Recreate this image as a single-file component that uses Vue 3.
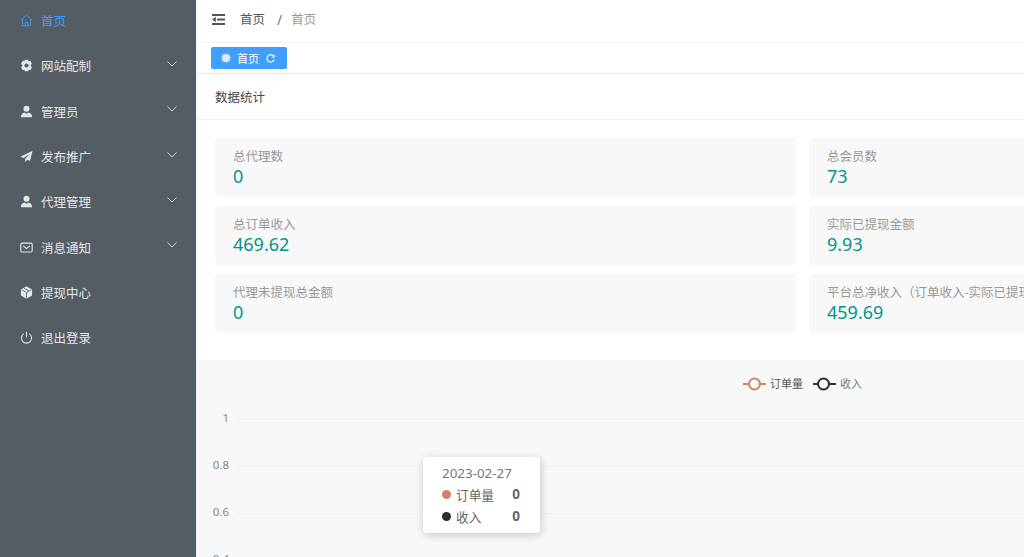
<template>
  <div class="layout">
    <aside class="sidebar">
      <ul class="menu">
        <li
          v-for="item in menus"
          :key="item.title"
          class="menu-item"
          :class="{ active: item.active }"
        >
          <svg class="menu-icon" viewBox="0 0 16 16" v-html="item.icon"></svg>
          <span class="menu-title">{{ item.title }}</span>
          <svg v-if="item.arrow" class="menu-arrow" viewBox="0 0 12 8">
            <path d="M1.500 1.500 6 6l4.500-4.500" fill="none" stroke="currentColor" stroke-width="1" />
          </svg>
        </li>
      </ul>
    </aside>

    <main class="main">
      <header class="navbar">
        <svg class="fold" viewBox="0 0 13 11">
          <path d="M0 1h13M5 5.500h8M0 10h13" stroke="#555" stroke-width="2" fill="none" />
          <path d="M3.800 2.800v5.400L0 5.500z" fill="#555" />
        </svg>
        <span class="crumb">首页</span>
        <span class="crumb-sep">/</span>
        <span class="crumb muted">首页</span>
      </header>

      <div class="tags">
        <div class="tag">
          <i class="tag-dot"></i>
          <span>首页</span>
          <svg class="tag-refresh" viewBox="0 0 12 12">
            <path d="M9.800 4.200A4 4 0 1 0 10 7" fill="none" stroke="#fff" stroke-width="1.300" />
            <path d="M10.600 1.600v3.300H7.300z" fill="#fff" />
          </svg>
        </div>
      </div>

      <section class="panel">
        <div class="panel-head">数据统计</div>
        <div class="stats">
          <div v-for="stat in stats" :key="stat.label" class="stat">
            <div class="stat-label">{{ stat.label }}</div>
            <div class="stat-value">{{ stat.value }}</div>
          </div>
        </div>
      </section>

      <section class="chart">
        <svg class="chart-canvas" width="827" height="197" viewBox="197 360 827 197">
          <g class="legend">
            <path d="M743 384h23" stroke="#d48265" stroke-width="2" />
            <circle cx="754.500" cy="384" r="5.500" fill="#f8f8f8" stroke="#d48265" stroke-width="2" />
            <text x="770" y="388">订单量</text>
            <path d="M813 384h23" stroke="#333" stroke-width="2" />
            <circle cx="823.500" cy="384" r="5.500" fill="#f8f8f8" stroke="#2b2b2b" stroke-width="2" />
            <text class="legend-muted" x="840" y="388">收入</text>
          </g>
          <g v-for="line in gridLines" :key="line.label">
            <path :d="`M237 ${line.y}H1024`" stroke="#eef1f6" stroke-width="1" />
            <text class="axis" x="229" :y="line.text" text-anchor="end">{{ line.label }}</text>
          </g>
        </svg>
        <div class="tooltip">
          <div class="tooltip-date">2023-02-27</div>
          <div class="tooltip-row">
            <i class="dot orange"></i>
            <span class="tooltip-name">订单量</span>
            <b>0</b>
          </div>
          <div class="tooltip-row">
            <i class="dot dark"></i>
            <span class="tooltip-name">收入</span>
            <b>0</b>
          </div>
        </div>
      </section>
    </main>
  </div>
</template>

<script setup>
const person = '<circle cx="8" cy="4.600" r="3.700" fill="currentColor"/><path d="M1 15c0-4 2.600-5.600 4.400-5.900C6 10 7 10.400 8 10.400s2-.4 2.600-1.300C12.400 9.400 15 11 15 15z" fill="currentColor"/>'

const menus = [
  {
    title: '首页',
    active: true,
    icon: '<path d="M1.200 7.600 8 1.400l6.800 6.200M3 6.300v8.200h10V6.300M6.300 14.500v-3.800h3.400v3.800" fill="none" stroke="currentColor" stroke-width="1.200"/>'
  },
  {
    title: '网站配制',
    arrow: true,
    icon: '<path fill-rule="evenodd" fill="currentColor" d="M6 .8h4l.6 2.100 2.100-.6 2 3.400-1.500 1.600v1.400l1.500 1.600-2 3.400-2.100-.6L10 15.200H6l-.6-2.100-2.100.6-2-3.400 1.500-1.600V7.300L1.300 5.700l2-3.400 2.100.6zM8 5.400a2.600 2.600 0 1 0 0 5.200 2.600 2.600 0 0 0 0-5.200z"/>'
  },
  { title: '管理员', arrow: true, icon: person },
  {
    title: '发布推广',
    arrow: true,
    icon: '<path fill="currentColor" d="M15.500 1 .5 8.200l4.200 1.700L12.500 4.400 6.400 10.700v4.300l2.500-3 3.400 1.500z"/>'
  },
  { title: '代理管理', arrow: true, icon: person },
  {
    title: '消息通知',
    arrow: true,
    icon: '<rect x="1" y="2.600" width="14" height="11" rx="1.500" fill="none" stroke="currentColor" stroke-width="1.400"/><path d="M3.800 6 8 9.200 12.200 6" fill="none" stroke="currentColor" stroke-width="1.400"/>'
  },
  {
    title: '提现中心',
    icon: '<path fill="currentColor" d="M8 .4l6.900 3.800v7.600L8 15.600l-6.900-3.800V4.200z"/><path d="M2 4.500 8 8l6-3.500M8 8v7M5 2.800l6 3.300" fill="none" stroke="#545c64" stroke-width="1"/>'
  },
  {
    title: '退出登录',
    icon: '<path d="M4.800 3.200a6.300 6.300 0 1 0 6.400 0M8 .8v7" fill="none" stroke="currentColor" stroke-width="1.300"/>'
  }
]

const stats = [
  { label: '总代理数', value: '0' },
  { label: '总会员数', value: '73' },
  { label: '总订单收入', value: '469.62' },
  { label: '实际已提现金额', value: '9.93' },
  { label: '代理未提现总金额', value: '0' },
  { label: '平台总净收入（订单收入-实际已提现金额）', value: '459.69' }
]

const gridLines = [
  { label: '1', y: 419.5, text: 422 },
  { label: '0.8', y: 466.5, text: 469 },
  { label: '0.6', y: 513.5, text: 516 },
  { label: '0.4', y: 560.5, text: 563 }
]
</script>

<style>
html,
body {
  margin: 0;
  height: 100%;
  overflow: hidden;
}
</style>

<style scoped>
.layout {
  display: flex;
  width: 1024px;
  height: 557px;
  overflow: hidden;
  font-family: "Noto Sans", "Noto Sans CJK SC", sans-serif;
  color: #606266;
}

.sidebar {
  flex: 0 0 196px;
  background: #545c64;
  overflow: hidden;
}

.menu {
  list-style: none;
  margin: -2px 0 0;
  padding: 0;
}

.menu-item {
  display: flex;
  align-items: center;
  height: 45.300px;
  padding: 0 18px 0 20px;
  font-size: 12.500px;
  color: #e4e6e8;
}

.menu-item.active {
  color: #409eff;
}

.menu-icon {
  flex: none;
  width: 13px;
  height: 13px;
  margin-right: 8px;
}

.menu-title {
  flex: 1;
}

.menu-arrow {
  flex: none;
  width: 12px;
  height: 8px;
  margin-top: -4px;
  color: #c9ced3;
}

.main {
  flex: 1;
  min-width: 0;
  display: flex;
  flex-direction: column;
  overflow: hidden;
  background: #fff;
  border-left: 1px solid #eef0f6;
}

.navbar {
  flex: none;
  display: flex;
  align-items: center;
  height: 42px;
  box-sizing: content-box;
  padding: 0 0 0 15px;
  font-size: 12.500px;
  line-height: 38px;
  border-bottom: 1px solid #f2f3f5;
}

.fold {
  width: 13px;
  height: 11px;
  margin: -3px 15px 0 0;
}

.crumb {
  margin-top: -3px;
  color: #555;
}

.crumb.muted {
  color: #999;
}

.crumb-sep {
  margin: -3px 9px 0 12px;
  font-size: 14px;
  color: #777;
}

.tags {
  flex: none;
  height: 31px;
  padding: 4px 0 0 14px;
  box-sizing: border-box;
  background: #fff;
  border-bottom: 1px solid #eceef3;
}

.tag {
  display: flex;
  align-items: center;
  width: 76px;
  height: 22px;
  box-sizing: border-box;
  padding-left: 11px;
  background: #409eff;
  border-radius: 2px;
  color: #fff;
  font-size: 11px;
}

.tag-dot {
  width: 8px;
  height: 8px;
  margin-right: 7px;
  border-radius: 50%;
  background: #fff;
  opacity: 0.8;
  box-shadow: 0 0 2px rgba(255, 255, 255, 0.8);
}

.tag-refresh {
  width: 11px;
  height: 11px;
  margin-left: 6px;
}

.panel {
  flex: none;
  width: 1420px;
  height: 286px;
  box-sizing: border-box;
  background: #fff;
  box-shadow: 0 1px 4px rgba(0, 21, 41, 0.08);
  position: relative;
}

.panel-head {
  height: 46px;
  box-sizing: border-box;
  padding: 15px 0 0 18px;
  font-size: 12.500px;
  line-height: 18px;
  color: #444;
  border-bottom: 1px solid #f0f1f4;
}

.stats {
  display: grid;
  grid-template-columns: 581px 581px;
  column-gap: 13px;
  row-gap: 9px;
  padding: 18px 0 0 18px;
}

.stat {
  height: 59px;
  box-sizing: border-box;
  padding: 9px 0 0 18px;
  border-radius: 4px;
  background: #f8f8f8;
  white-space: nowrap;
}

.stat-label {
  font-size: 12.500px;
  line-height: 19px;
  color: #999;
}

.stat-value {
  font-size: 18px;
  line-height: 21px;
  color: #009688;
}

.chart {
  position: relative;
  flex: 1;
  min-height: 0;
  background: #f8f8f8;
  overflow: hidden;
}

.chart-canvas {
  display: block;
}

.legend text {
  font-size: 11px;
  fill: #555;
}

.legend .legend-muted {
  fill: #777;
}

.axis {
  font-size: 11.500px;
  fill: #888;
}

.tooltip {
  position: absolute;
  left: 226px;
  top: 97px;
  width: 117px;
  height: 76px;
  box-sizing: border-box;
  padding: 6px 20px 0 19px;
  background: #fff;
  border-radius: 4px;
  box-shadow: 1px 2px 10px rgba(0, 0, 0, 0.2);
  color: #666;
}

.tooltip-date {
  font-size: 13.400px;
  line-height: 20px;
  color: #777;
}

.tooltip-row {
  display: flex;
  align-items: center;
  height: 22px;
  font-size: 12.700px;
}

.tooltip-name {
  flex: 1;
}

.tooltip-row b {
  font-size: 13.500px;
  font-weight: 700;
}

.dot {
  width: 9px;
  height: 9px;
  margin-right: 5px;
  border-radius: 50%;
}

.dot.orange {
  background: #d48265;
}

.dot.dark {
  background: #2b2b2b;
}
</style>
